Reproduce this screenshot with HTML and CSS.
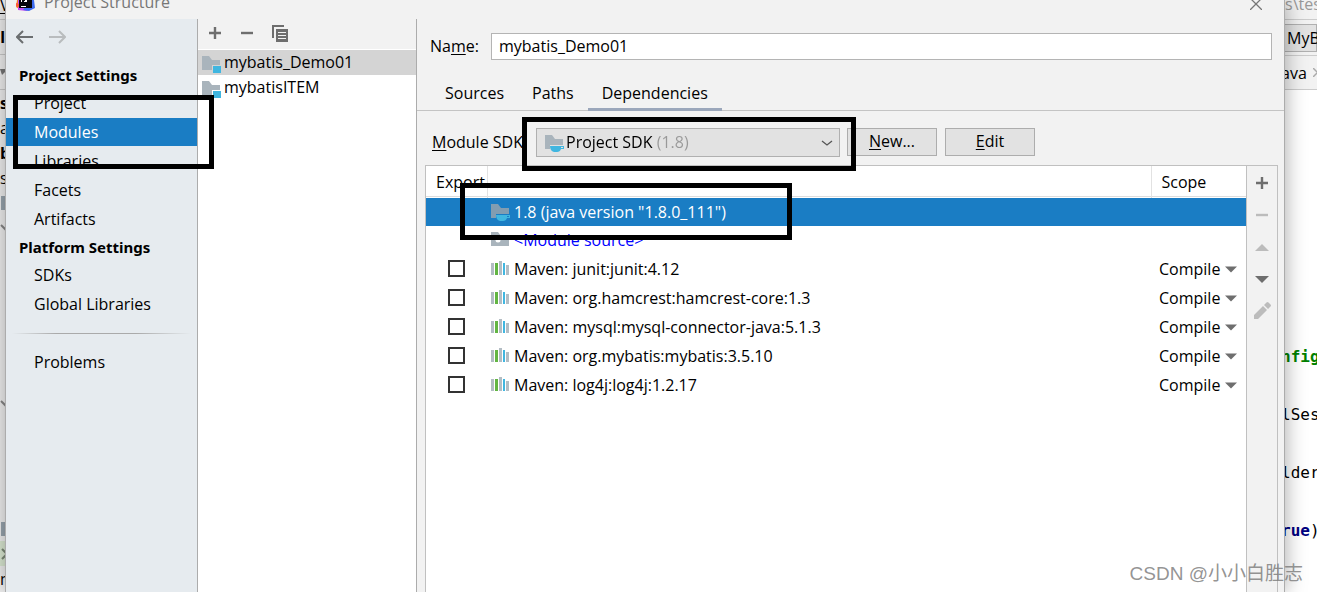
FILE: index.html
```html
<!DOCTYPE html>
<html lang="en">
<head>
<meta charset="utf-8">
<title>Project Structure</title>
<link rel="stylesheet" href="styles.css">
</head>
<body>
<svg class="defs" aria-hidden="true">
  <symbol id="module" viewBox="0 0 19 18"><path d="M0 1h7l3 4h8v5h-8v5H0z" fill="#a9b4bc"/><path d="M11 11h8v7h-8z" fill="#40b6e0"/></symbol>
  <symbol id="sdk" viewBox="0 0 19 18"><path d="M0 1h7l3 4h8v6H5v4H0z" fill="#a9b4bc"/><path d="M5 12h14v3h-3q-1 3-4 3H9q-4-1-4-6zm11 1v1h2v-1z" fill="#40b6e0" fill-rule="evenodd"/></symbol>
  <symbol id="sdk-sel" viewBox="0 0 19 18"><path d="M0 1h7l3 4h8v6H5v4H0z" fill="#829db1"/><path d="M5 12h14v3h-3q-1 3-4 3H9q-4-1-4-6zm11 1v1h2v-1z" fill="#40b6e0" fill-rule="evenodd"/></symbol>
  <symbol id="source" viewBox="0 0 19 18"><path d="M0 1h7l3 4h8v10H0z" fill="#a9b4bc"/><circle cx="7" cy="9" r="2.5" fill="#fff"/></symbol>
  <symbol id="library" viewBox="0 0 19 18"><path d="M0 3h3v12H0zM8 1h3v14H8zM15 5h3v10h-3z" fill="#b3bdc4"/><path d="M4 3h3v12H4z" fill="#62b543"/><path d="M12 3h2v12h-2z" fill="#40b6e0"/></symbol>
  <symbol id="plus" viewBox="0 0 14 14"><path d="M7 1v12M1 7h12" stroke="currentColor" stroke-width="2.4"/></symbol>
  <symbol id="minus" viewBox="0 0 14 14"><path d="M1 7h12" stroke="currentColor" stroke-width="2.4"/></symbol>
  <symbol id="down" viewBox="0 0 14 14"><path d="M0 4h14L7 11z" fill="currentColor"/></symbol>
  <symbol id="up" viewBox="0 0 14 14"><path d="M0 11h14L7 4z" fill="currentColor"/></symbol>
</svg>

<div class="screen">
  <aside class="behind-left">
    <div class="bl-title"><u>V</u></div>
    <div class="bl-bar"><b>I</b></div>
    <div class="bl-bar"><svg width="8" height="7"><path d="M0 0h8L2 6z" fill="#777"/></svg></div>
    <div class="bl-row"><b>s</b></div>
    <div class="bl-row">a</div>
    <div class="bl-row"><b>b</b></div>
    <div class="bl-row">s</div>
    <div class="bl-row"><i class="block"></i></div>
    <div class="bl-row"><svg width="8" height="8"><path d="M1 1l5 5" stroke="#888" stroke-width="2"/></svg></div>
    <div class="bl-gap"></div>
    <div class="bl-row"><svg width="8" height="8"><path d="M1 1l5 5" stroke="#888" stroke-width="2"/></svg></div>
    <div class="bl-gap small"></div>
    <div class="bl-row"><i class="block"></i></div>
    <div class="bl-row green"><svg width="8" height="12"><path d="M2 1l5 5-5 5" fill="none" stroke="#7d8b78" stroke-width="2"/></svg></div>
    <div class="bl-row">m</div>
  </aside>

  <main class="dialog">
    <header class="titlebar">
      <svg width="20" height="11" viewBox="0 0 20 11"><path d="M1 0l2-1v10L0 7z" fill="#fc801d"/><path d="M2 0h3l9 9-3 2-9-1z" fill="#c44af0"/><path d="M0 3l3 1v3l-3-1z" fill="#fc5a3d"/><path d="M14 0h4l1 8-6 3-6-1z" fill="#3d6bf0"/><path d="M3 0h13v8H3z" fill="#05050a"/><path d="M5 6h5v1H5zM5 0h1v2H5zM9 0h2v2H8V1h1z" fill="#fff"/></svg>
      <h1>Project Structure</h1>
      <button class="icon-btn close" aria-label="Close"><svg width="12" height="12" viewBox="0 0 12 12"><path d="M0 0l12 12M12 0L0 12" stroke="#777" stroke-width="1.3"/></svg></button>
    </header>

    <div class="panes">
      <nav class="sidebar">
        <div class="history">
          <button class="icon-btn" aria-label="Back"><svg width="17" height="14" viewBox="0 0 17 14"><path d="M17 7H2M7 1L1 7l6 6" fill="none" stroke="#6b6e70" stroke-width="2"/></svg></button>
          <button class="icon-btn" aria-label="Forward"><svg width="17" height="14" viewBox="0 0 17 14"><path d="M0 7h15M10 1l6 6-6 6" fill="none" stroke="#b9bcbe" stroke-width="2"/></svg></button>
        </div>
        <h2>Project Settings</h2>
        <a href="#project">Project</a>
        <a href="#modules" class="current">Modules</a>
        <a href="#libraries">Libraries</a>
        <a href="#facets">Facets</a>
        <a href="#artifacts">Artifacts</a>
        <h2>Platform Settings</h2>
        <a href="#sdks">SDKs</a>
        <a href="#global">Global Libraries</a>
        <hr>
        <a href="#problems">Problems</a>
      </nav>

      <section class="modules">
        <div class="toolbar">
          <button class="icon-btn" aria-label="Add"><svg width="14" height="14"><use href="#plus"/></svg></button>
          <button class="icon-btn" aria-label="Remove"><svg width="14" height="14"><use href="#minus"/></svg></button>
          <button class="icon-btn" aria-label="Copy"><svg width="16" height="17" viewBox="0 0 16 17"><path d="M1 13V1h11" fill="none" stroke="#6e6e6e" stroke-width="2"/><path d="M4 4h12v13H4z" fill="#6e6e6e"/><path d="M6 7.500h8M6 10.500h8M6 13.500h8" stroke="#f2f2f2" stroke-width="1.200"/></svg></button>
        </div>
        <ul>
          <li class="chosen"><svg width="19" height="18"><use href="#module"/></svg>mybatis_Demo01</li>
          <li><svg width="19" height="18"><use href="#module"/></svg>mybatisITEM</li>
        </ul>
      </section>

      <section class="editor">
        <div class="name-row">
          <label for="name">Na<u>m</u>e:</label>
          <input id="name" type="text" value="mybatis_Demo01">
        </div>
        <div class="tabs" role="tablist">
          <button role="tab">Sources</button>
          <button role="tab">Paths</button>
          <button role="tab" aria-selected="true">Dependencies</button>
        </div>
        <div class="sdk-row">
          <label for="sdk-choice"><u>M</u>odule SDK:</label>
          <div class="combo">
            <svg width="19" height="18"><use href="#sdk"/></svg>
            <select id="sdk-choice"><option>Project SDK (1.8)</option></select>
            <svg class="chevron" width="12" height="6" viewBox="0 0 12 6"><path d="M1 1l5 4 5-4" fill="none" stroke="#555" stroke-width="1.300"/></svg>
          </div>
          <button class="push"><u>N</u>ew...</button>
          <button class="push"><u>E</u>dit</button>
        </div>
        <div class="deps">
          <div class="table-box">
            <table>
              <thead><tr><th class="c-export">Export</th><th></th><th class="c-scope">Scope</th></tr></thead>
              <tbody>
                <tr class="short chosen"><td></td><td><span class="entry"><svg width="19" height="18"><use href="#sdk-sel"/></svg>1.8 (java version "1.8.0_111")</span></td><td></td></tr>
                <tr class="short"><td></td><td><span class="entry src"><svg width="19" height="18"><use href="#source"/></svg>&lt;Module source&gt;</span></td><td></td></tr>
                <tr><td><input type="checkbox" aria-label="Export junit"></td><td><span class="entry"><svg width="19" height="18"><use href="#library"/></svg>Maven: junit:junit:4.12</span></td><td><span class="scope"><select aria-label="Scope of junit"><option>Compile</option></select><svg width="12" height="12"><use href="#down"/></svg></span></td></tr>
                <tr><td><input type="checkbox" aria-label="Export hamcrest"></td><td><span class="entry"><svg width="19" height="18"><use href="#library"/></svg>Maven: org.hamcrest:hamcrest-core:1.3</span></td><td><span class="scope"><select aria-label="Scope of hamcrest"><option>Compile</option></select><svg width="12" height="12"><use href="#down"/></svg></span></td></tr>
                <tr><td><input type="checkbox" aria-label="Export mysql"></td><td><span class="entry"><svg width="19" height="18"><use href="#library"/></svg>Maven: mysql:mysql-connector-java:5.1.3</span></td><td><span class="scope"><select aria-label="Scope of mysql"><option>Compile</option></select><svg width="12" height="12"><use href="#down"/></svg></span></td></tr>
                <tr><td><input type="checkbox" aria-label="Export mybatis"></td><td><span class="entry"><svg width="19" height="18"><use href="#library"/></svg>Maven: org.mybatis:mybatis:3.5.10</span></td><td><span class="scope"><select aria-label="Scope of mybatis"><option>Compile</option></select><svg width="12" height="12"><use href="#down"/></svg></span></td></tr>
                <tr><td><input type="checkbox" aria-label="Export log4j"></td><td><span class="entry"><svg width="19" height="18"><use href="#library"/></svg>Maven: log4j:log4j:1.2.17</span></td><td><span class="scope"><select aria-label="Scope of log4j"><option>Compile</option></select><svg width="12" height="12"><use href="#down"/></svg></span></td></tr>
              </tbody>
            </table>
          </div>
          <div class="side-tools">
            <button class="icon-btn" aria-label="Add dependency"><svg width="14" height="14"><use href="#plus"/></svg></button>
            <button class="icon-btn off" aria-label="Remove dependency"><svg width="14" height="14"><use href="#minus"/></svg></button>
            <button class="icon-btn off" aria-label="Move up"><svg width="14" height="14"><use href="#up"/></svg></button>
            <button class="icon-btn" aria-label="Move down"><svg width="14" height="14"><use href="#down"/></svg></button>
            <button class="icon-btn off" aria-label="Edit dependency"><svg width="17" height="17" viewBox="0 0 17 17"><path d="M0 17v-4l9-9 4 4-9 9zM10 3l2.500-2.500q1-1 2 0L16.500 2.500q1 1 0 2L14 7z" fill="currentColor"/></svg></button>
          </div>
        </div>
      </section>
    </div>
  </main>

  <aside class="behind-right">
    <div class="br-title">s\test</div>
    <div class="br-bar"><span>MyBatis</span></div>
    <div class="br-tab">ava <svg width="9" height="9" viewBox="0 0 9 9"><path d="M0 0l9 9M9 0L0 9" stroke="#aaa" stroke-width="1.500"/></svg></div>
    <pre class="code"><b class="str">nfig</b>
lSess
lder
<b class="kw">rue</b>)</pre>
  </aside>

  <div class="mark mark-modules"></div>
  <div class="mark mark-sdk"></div>
  <div class="mark mark-java"></div>
  <div class="watermark">CSDN @小小白胜志</div>
</div>
</body>
</html>
```
FILE: styles.css
```css
* { box-sizing: border-box; }
body {
  margin: 0;
  font: 16px/20px "Open Sans", "Noto Sans", sans-serif;
  color: #000;
  background: #fff;
}
button, input, select { font: inherit; color: inherit; margin: 0; }
h1, h2, ul, pre { margin: 0; padding: 0; }
u { text-underline-offset: 2px; }
svg { flex: none; }
.defs { position: absolute; width: 0; height: 0; }

.screen {
  position: relative;
  display: flex;
  height: 100vh;
  overflow: hidden;
}

/* editor window showing on the left */
.behind-left {
  flex: none;
  width: 5px;
  background: #f2f2f2;
  white-space: nowrap;
}
.behind-left > div { display: flex; align-items: center; overflow: hidden; }
.bl-title { height: 20px; line-height: 8px; padding-bottom: 10px; border-bottom: 1px solid #ccc; }
.bl-bar { height: 35px; border-bottom: 1px solid #ccc; }
.bl-row { height: 25px; }
.bl-gap { height: 151px; }
.bl-gap.small { height: 100px; }
.green { background: #dcebd4; }
.block { width: 8px; height: 14px; margin-left: 1px; flex: none; background: #9aa7b0; }

/* dialog */
.dialog {
  position: relative;
  flex: 1;
  min-width: 0;
  display: flex;
  flex-direction: column;
  border: solid #acacac;
  border-width: 0 1px;
  background: #f2f2f2;
  box-shadow: 0 0 20px rgba(0, 0, 0, .35);
}
.titlebar {
  display: flex;
  align-items: flex-start;
  height: 19px;
  padding: 0 22px 0 10px;
  gap: 8px;
}
.titlebar h1 { flex: 1; font-size: 16px; font-weight: 400; line-height: 4px; color: #777; }
.icon-btn {
  display: flex;
  align-items: center;
  justify-content: center;
  padding: 0;
  border: 0;
  background: none;
  color: #6e6e6e;
}
.icon-btn.off { color: #bcbcbc; }
.close { height: 8px; }
.panes { flex: 1; display: flex; min-height: 0; }

.sidebar {
  flex: none;
  width: 192px;
  display: flex;
  flex-direction: column;
  border-right: 1px solid #acacac;
  background: #e6ebef;
}
.history { display: flex; gap: 16px; padding: 0 10px; height: 35px; margin-bottom: 8px; }
.sidebar h2 { padding-left: 13px; font: bold 15px/27px "Noto Sans", sans-serif; }
.sidebar a { padding-left: 28px; line-height: 28px; margin-bottom: 1px; color: #000; text-decoration: none; }
.sidebar .current { background: #1a7dc4; color: #fff; }
.sidebar hr {
  width: 100%;
  height: 1px;
  margin: 14px 0;
  border: 0;
  background: linear-gradient(90deg, transparent 6px, #aaa 50px, #aaa 130px, transparent 185px);
}

.modules { flex: none; width: 219px; border-right: 1px solid #acacac; background: #fff; }
.toolbar { display: flex; align-items: center; gap: 18px; height: 30px; padding: 0 0 2px 10px; background: #f2f2f2; margin-bottom: 1px; }
.modules li { display: flex; align-items: center; gap: 3px; height: 25px; padding: 0 0 2px 4px; }
.modules li svg { align-self: flex-end; }
.modules .chosen { background: #d4d4d4; }

.editor { flex: 1; min-width: 0; display: flex; flex-direction: column; }
.name-row { display: flex; align-items: center; padding: 14px 12px 0 13px; }
.name-row label { width: 61px; padding-bottom: 2px; }
.name-row input { flex: 1; height: 27px; padding: 0 7px 2px; border: 1px solid #b4b4b4; background: #fff; }
.tabs { display: flex; height: 51px; padding: 16px 0 0 14px; border-bottom: 1px solid #c4c4c4; }
.tabs button { height: 35px; padding: 2px 14px 0; border: 0; border-bottom: 3px solid transparent; background: none; }
.tabs [aria-selected="true"] { border-color: #9ba7bb; }
.sdk-row { display: flex; align-items: flex-start; padding: 17px 0 0 15px; gap: 7px; height: 54px; }
.sdk-row label { width: 97px; line-height: 28px; white-space: nowrap; }
.combo { display: flex; align-items: center; width: 304px; height: 29px; padding: 0 6px 0 8px; gap: 2px; border: 1px solid #b0b0b0; background: #e2e2e2; }
select { appearance: none; border: 0; padding: 0; background: none; }
.combo select {
  flex: 1;
  padding-bottom: 2px;
  background: linear-gradient(90deg, #000 88px, #999 88px);
  background-clip: text;
  -webkit-background-clip: text;
  color: transparent;
}
.push { width: 90px; height: 28px; padding: 0 0 2px; border: 1px solid #adadad; background: #e2e2e2; }
.push + .push { margin-left: 1px; }

.deps { flex: 1; display: flex; min-height: 0; margin: 0 6px 0 8px; border: solid #c0c0c0; border-width: 1px 1px 0; }
.table-box { flex: 1; border-right: 1px solid #c0c0c0; background: #fff; }
table { width: 100%; border-collapse: collapse; table-layout: fixed; }
th { height: 32px; padding: 0 10px; font-weight: 400; text-align: left; background: linear-gradient(#ddd, #ddd) 0 30px / 100% 1px no-repeat; border-right: 1px solid #e2e2e2; }
th:last-child { border-right: 0; }
.c-export { width: 61px; }
.c-scope { width: 95px; }
td { height: 29px; padding: 0; }
.short td { height: 28px; }
td:first-child { padding-left: 22px; }
td:nth-child(2) { padding-left: 4px; }
td:last-child { padding-left: 8px; }
.entry, .scope { display: flex; align-items: center; gap: 4px; color: inherit; }
.scope svg { color: #6e6e6e; }
.entry.src { color: #00f; }
tbody .chosen { background: #1a7dc4; color: #fff; }
input[type="checkbox"] { display: block; appearance: none; width: 17px; height: 17px; border: 2px solid #333; background: #fff; }
.side-tools { display: flex; flex-direction: column; align-items: center; gap: 15px; width: 30px; padding-top: 8px; }
.side-tools .icon-btn { height: 17px; }

/* editor window showing on the right */
.behind-right { flex: none; width: 32px; overflow: hidden; white-space: nowrap; background: #fff; }
.br-title { height: 20px; line-height: 8px; color: #999; background: #f2f2f2; border-bottom: 1px solid #ccc; }
.br-bar { height: 36px; padding: 4px 0 3px; background: #f2f2f2; border-bottom: 1px solid #ccc; }
.br-bar span { display: block; height: 28px; padding-left: 2px; line-height: 26px; background: #e2e2e2; border: 1px solid #b0b0b0; border-left: 0; }
.br-tab { display: flex; align-items: center; gap: 6px; height: 34px; margin-left: -4px; background: #f2f2f2; border-bottom: 1px solid #ccc; }
.code { padding-top: 238px; margin-left: -4px; font: 16px/58px "DejaVu Sans Mono", monospace; }
.str { color: #008000; }
.kw { color: #000080; }

/* highlight frames drawn over the dialog */
.mark { position: absolute; border: 5px solid #000; pointer-events: none; }
.mark-modules { left: 13px; top: 95px; width: 201px; height: 74px; }
.mark-sdk { left: 522px; top: 117px; width: 334px; height: 54px; }
.mark-java { left: 460px; top: 183px; width: 332px; height: 57px; }
.watermark { position: absolute; right: 14px; bottom: 5px; font: 19px/26px "Liberation Sans", "Noto Sans CJK SC", sans-serif; color: rgba(120, 120, 120, .8); }
```
